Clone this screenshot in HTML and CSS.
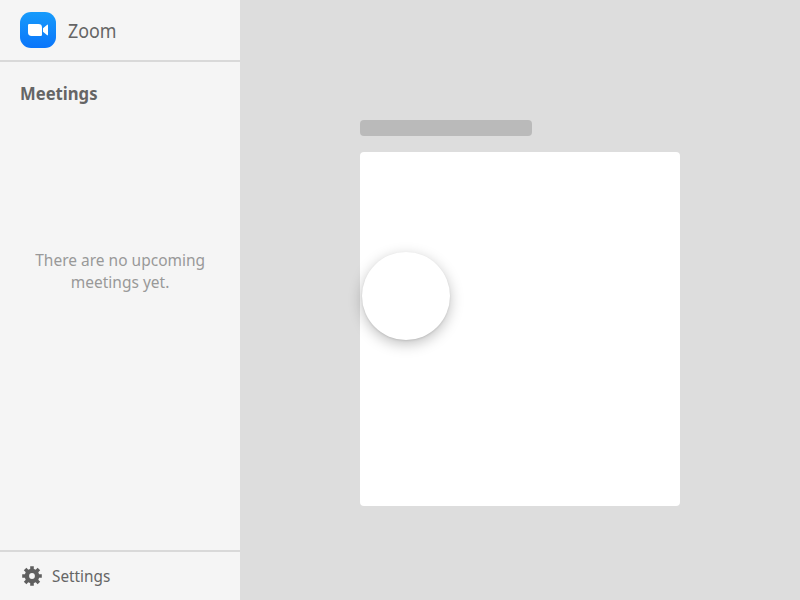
FILE: index.html
```
<!DOCTYPE html>
<html lang="en">
<head>
<meta charset="utf-8">
<title>Zoom</title>
<link rel="stylesheet" href="styles.css">
</head>
<body>
<div class="app">
  <aside class="sidebar">
    <header class="brand">
      <svg class="logo" viewBox="0 0 36 36" aria-hidden="true">
        <defs><linearGradient id="blue" x1="0" y1="0" x2="0" y2="1"><stop offset="0" stop-color="#179bfb"/><stop offset="1" stop-color="#0a75fa"/></linearGradient></defs>
        <rect width="36" height="36" rx="11" fill="url(#blue)"/>
        <path fill="#fff" d="M8 13.2Q8 12 9.2 12H18.4Q22 12 22 15.4V22.8Q22 24 20.8 24H11.6Q8 24 8 20.6ZM23 16.2L26.9 12.9Q28 12.1 28 13.4V22.6Q28 23.9 26.9 23.1L23 19.8Z"/>
      </svg>
      <span class="brand-name">Zoom</span>
    </header>
    <main class="meetings">
      <h2 class="title"><span class="title-text">Meetings</span></h2>
      <p class="empty"><span class="line">There are no upcoming</span><span class="line">meetings yet.</span></p>
    </main>
    <footer class="settings">
      <svg class="gear" viewBox="0 0 20 20" aria-hidden="true">
        <g fill="none" stroke="#5f5f5f">
          <path stroke-width="3.6" stroke-linejoin="round" d="M10 .2V5M10 15V19.8M.2 10H5M15 10H19.8M3.1 3.1L6 6M14 14L16.9 16.9M16.9 3.1L14 6M6 14L3.1 16.9"/>
          <circle cx="10" cy="10" r="5.1" stroke-width="4.4"/>
        </g>
      </svg>
      <span class="settings-text">Settings</span>
    </footer>
  </aside>
  <section class="canvas">
    <div class="label-bar"></div>
    <div class="artboard"><div class="disc"></div></div>
  </section>
</div>
</body>
</html>
```
FILE: styles.css
```
* { box-sizing: border-box; }
body {
  margin: 0;
  font-family: "Noto Sans", sans-serif;
  color: #656565;
}
.app {
  display: flex;
  width: 800px;
  height: 600px;
  background: #ddd;
}
.sidebar {
  display: flex;
  flex-direction: column;
  width: 240px;
  background: #f5f5f5;
}
.brand {
  display: flex;
  align-items: center;
  gap: 12px;
  height: 62px;
  padding: 0 20px;
  border-bottom: 2px solid #d9d9d9;
}
.logo { width: 36px; height: 36px; }
.brand-name {
  padding-top: 2px;
  font-size: 19px;
  line-height: 24px;
  transform: scaleX(.94);
  transform-origin: left;
}
.meetings { flex: 1; padding: 19px 20px 0; }
.title { margin: 0; font-size: 18.5px; line-height: 24px; }
.title-text {
  display: inline-block;
  transform: scaleX(.9);
  transform-origin: left;
}
.empty {
  display: flex;
  flex-direction: column;
  align-items: center;
  margin: 144px 0 0;
  font-size: 17px;
  line-height: 22px;
  color: #999;
}
.line { white-space: nowrap; transform: scaleX(.912); }
.settings {
  display: flex;
  align-items: center;
  gap: 10px;
  height: 50px;
  padding: 0 22px;
  border-top: 2px solid #d9d9d9;
}
.gear { width: 20px; height: 20px; }
.settings-text {
  font-size: 17px;
  line-height: 24px;
  transform: scaleX(.9);
  transform-origin: left;
}
.canvas { flex: 1; padding: 120px 0 0 120px; }
.label-bar {
  width: 172px;
  height: 16px;
  margin-bottom: 16px;
  border-radius: 4px;
  background: #bababa;
}
.artboard {
  width: 320px;
  height: 354px;
  padding: 100px 0 0 2px;
  border-radius: 4px;
  background: #fff;
}
.disc {
  width: 88px;
  height: 88px;
  border-radius: 50%;
  background: #fff;
  box-shadow: 0 4px 14px rgba(0, 0, 0, .25), 0 1px 2px rgba(0, 0, 0, .1);
}
```
